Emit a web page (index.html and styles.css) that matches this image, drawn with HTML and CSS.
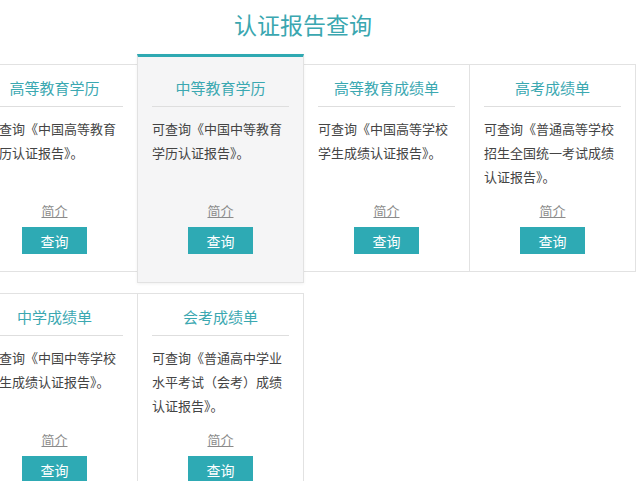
FILE: index.html
```html
<!DOCTYPE html>
<html lang="zh-CN">
<head>
  <meta charset="UTF-8">
  <title>认证报告查询</title>
  <link rel="stylesheet" href="styles.css">
</head>
<body>
  <div class="report-wrap">
    <h1 class="page-title">认证报告查询</h1>

    <div class="card-row">
      <div class="card">
        <div class="card-title">高等教育学历</div>
        <p class="card-desc">可查询《中国高等教育学历认证报告》。</p>
        <a class="card-intro">简介</a>
        <button class="query-btn">查询</button>
      </div>
      <div class="card active">
        <div class="card-title">中等教育学历</div>
        <p class="card-desc">可查询《中国中等教育学历认证报告》。</p>
        <a class="card-intro">简介</a>
        <button class="query-btn">查询</button>
      </div>
      <div class="card">
        <div class="card-title">高等教育成绩单</div>
        <p class="card-desc">可查询《中国高等学校学生成绩认证报告》。</p>
        <a class="card-intro">简介</a>
        <button class="query-btn">查询</button>
      </div>
      <div class="card">
        <div class="card-title">高考成绩单</div>
        <p class="card-desc">可查询《普通高等学校招生全国统一考试成绩认证报告》。</p>
        <a class="card-intro">简介</a>
        <button class="query-btn">查询</button>
      </div>
    </div>

    <div class="card-row">
      <div class="card">
        <div class="card-title">中学成绩单</div>
        <p class="card-desc">可查询《中国中等学校学生成绩认证报告》。</p>
        <a class="card-intro">简介</a>
        <button class="query-btn">查询</button>
      </div>
      <div class="card">
        <div class="card-title">会考成绩单</div>
        <p class="card-desc">可查询《普通高中学业水平考试（会考）成绩认证报告》。</p>
        <a class="card-intro">简介</a>
        <button class="query-btn">查询</button>
      </div>
    </div>
  </div>
</body>
</html>
```

FILE: styles.css
```css
body {
  margin: 0;
  background: #fff;
  font-family: "Microsoft YaHei", "Noto Sans CJK SC", "Noto Sans", sans-serif;
  color: #444;
  overflow: hidden;
}

.report-wrap {
  width: 664px;
  margin-left: -29px;
}

.page-title {
  margin: 0;
  padding-top: 10px;
  font-size: 23px;
  line-height: 28px;
  font-weight: normal;
  text-align: center;
  color: #3aa7b0;
}

.card-row {
  display: flex;
  align-items: flex-start;
  margin-top: 26px;
}
.card-row + .card-row {
  margin-top: 21px;
}

.card {
  box-sizing: border-box;
  width: 167px;
  flex: none;
  margin-right: -1px;
  padding: 13px 14px 17px;
  border: 1px solid #e2e2e2;
  background: #fff;
  text-align: center;
  position: relative;
}

.card.active {
  margin-top: -10px;
  margin-bottom: -11px;
  padding-top: 21px;
  padding-bottom: 28px;
  border-top: 3px solid #2fa9b2;
  background: #f5f5f6;
  box-shadow: 0 1px 3px rgba(0, 0, 0, 0.06);
  z-index: 1;
}

.card-title {
  font-size: 15px;
  line-height: 20px;
  color: #3ba8b1;
  padding-bottom: 8px;
  border-bottom: 1px solid #dedede;
}

.card-desc {
  margin: 10px 0 0;
  min-height: 72px;
  font-size: 13px;
  line-height: 24px;
  text-align: left;
  color: #444;
}

.card-intro {
  display: block;
  margin-top: 12px;
  font-size: 13px;
  line-height: 20px;
  color: #8a8a8a;
  text-decoration: underline;
}

.query-btn {
  display: block;
  width: 65px;
  height: 27px;
  margin: 6px auto 0;
  padding: 0;
  border: none;
  background: #2eaab4;
  color: #fff;
  font-family: inherit;
  font-size: 14px;
  cursor: pointer;
}
```
